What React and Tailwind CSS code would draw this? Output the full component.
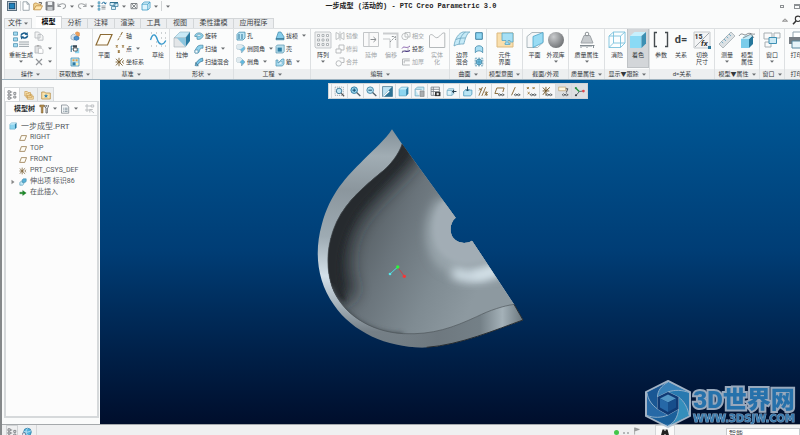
import React, { useState } from "react";

// small glyphs, drawn on a 10x10 grid
const glyphs = {
    app: <><rect x=".5" y=".5" width="9" height="9" fill="#d5dbe0" stroke="#5b6e7c" /><rect x="2.3" y="2.3" width="5.4" height="5.4" fill="#2384bd" stroke="#124d77" /></>,
    file: <path d="M2 .8h4l2.2 2.3v6.2H2zM6 .8v2.4h2.2" fill="#fff" stroke="#8b979e" strokeWidth=".8" />,
    open: <><path d="M.7 8.8V3l1-1h2l1 1h3v2" fill="#f3d695" stroke="#bd8d42" strokeWidth=".8" /><path d="M.8 8.8 3 4.8h6.5L7.6 8.8z" fill="#ffe6ae" stroke="#bd8d42" strokeWidth=".8" /><path d="M5.8 1.4 8.6 1.6 8.2 3.4" fill="none" stroke="#444" strokeWidth=".8" /></>,
    save: <><path d="M1 1h8v8H1z" fill="#85898d" stroke="#6c7074" strokeWidth=".8" /><path d="M2.8 1h4.4v3H2.8z" fill="#eef1f3" /><path d="M2.5 6h5v3h-5z" fill="#c8cccf" /></>,
    undo: <path d="M1 2.5v3h3M1.2 5.3C3 2.2 7.5 2 8.5 4.3 9 6.3 7.3 7.5 5.8 7.6" fill="none" stroke="#9b9fa2" strokeWidth="1.1" />,
    redo: <path d="M9 2.5v3H6M8.8 5.3C7 2.2 2.5 2 1.5 4.3 1 6.3 2.7 7.5 4.2 7.6" fill="none" stroke="#a5a8aa" strokeWidth="1.1" />,
    regen: <><path d="M1 .8h2v2H1zM1 4h2v2H1zM1 7.2h2v2H1z" fill="#8dcbe6" stroke="#377c9f" strokeWidth=".5" /><path d="M4.5 5h4M4.5 8h4M4.5 6.5h4" stroke="#707c84" strokeWidth=".7" /><path d="M5 3C5 .8 8 .8 8.5 2.5M7.3 2.3l1.3.6.5-1.4" fill="none" stroke="#14679a" strokeWidth="1" /></>,
    windows: <><path d="M1 1.5h5v3H1zM5 2.5h4v3H5zM2.5 5.5h4v3h-4z" fill="#d7eef8" stroke="#4685a5" strokeWidth=".8" /><path d="M1 1.5h8" stroke="#2f708f" /></>,
    closeWin: <path d="M2 2.5h6v5.2H2zM3 3.2l4 3.8M7 3.2 3 7" fill="none" stroke="#60666a" strokeWidth=".8" />,
    box: <path d="M1 3.2 3.2 1H9v5.8L6.8 9H1zM1 3.2h5.8V9M6.8 3.2 9 1" fill="#dff5fd" stroke="#3b9bc4" strokeWidth=".8" />,
    copy: <path d="M1 1h3.5L6 2.5V7H1zM4 3.4h3.4L9 5v4.2H4z" fill="#f4f5f5" stroke="#b4b8bb" strokeWidth=".8" />,
    paste: <><path d="M1 2h6v7H1z" fill="#e2e3e4" stroke="#b2b5b7" strokeWidth=".8" /><path d="M2.7 1h2.6v1.6H2.7z" fill="#aaa" /><path d="M4.4 4.2h3L9 5.8v3.6H4.4z" fill="#fff" stroke="#b2b5b7" strokeWidth=".7" /></>,
    cut: <path d="m2 2 6 6M8 2 2 8" stroke="#92969a" strokeWidth="1.2" />,
    userData: <><path d="M5 2.2 7 .8l2.4 1v3L7.3 6" fill="#f0a25d" stroke="#c77a36" strokeWidth=".5" /><path d="M1 4.8 3.3 3l3 1.4v3.2L4 9.2 1 8z" fill="#d5e4ef" stroke="#7e99ac" strokeWidth=".6" /><path d="m4 6 3-1 2 1.2v2L6.4 9.4 4 8.4z" fill="#4c91cd" stroke="#2b66a0" strokeWidth=".5" /></>,
    copyGeom: <><path d="M1.2 8V2h1.6M1.2 5h1.6" fill="none" stroke="#2a6f92" /><path d="M3 1.2h4v2.4H3z" fill="#3b4b56" /><path d="M5 4h4.2v5.2H5z" fill="#8fd4ef" /><path d="M3.5 4h3.7v3H3.5z" fill="#fff" stroke="#333" strokeWidth=".7" /></>,
    shrink: <><path d="M1 1h8v8H1z" fill="#bfe5f3" stroke="#4593b5" strokeWidth=".8" /><path d="M2.5 2.3h2v2h-2zM5.6 2.3h2v2h-2z" fill="#e3a24b" /><path d="M2.5 5.3h3v3h-3z" fill="#2e7ba3" /><path d="M6 6h2.3v2.3H6z" fill="#fff2b8" /></>,
    axis: <path d="M2.8 9.2 4 7.2M4.4 6.4l.8-1.3M5.6 4.4 7.4 1" stroke="#8a6b35" strokeWidth="1" />,
    points: <path d="m.8 1.3 2 2m0-2-2 2M7 1.3l2 2m0-2-2 2M2.8 6.5l2 2m0-2-2 2" stroke="#9a753a" strokeWidth="1.1" />,
    csys: <path d="M4 .8v8.4M.6 5H6M1 1.8l3 3.2 3.6-3.4M1 8.4 4 5l3.6 3.6M8.6 3.4 7.4 5l1.2 1.6" fill="none" stroke="#765b2e" strokeWidth=".9" />,
    revolve: <><path d="M.8 4.5C2 1 8 1 9.2 4.5 8.5 7.5 5.5 9 3 8.2V5.5H.8z" fill="#8fd3ec" stroke="#4c8aa5" strokeWidth=".7" /><ellipse cx="5" cy="4.3" rx="2" ry="1" fill="#f1fbff" stroke="#4c8aa5" strokeWidth=".5" /></>,
    sweep: <><path d="M1 6C2 6 2.5 1.4 6 1.2h3v3H7C5.5 4.5 5.5 9 4 9H1z" fill="#8ed1ec" stroke="#4787a5" strokeWidth=".7" /><path d="M1 6h3v3H1z" fill="#f6fcff" stroke="#4787a5" strokeWidth=".6" /></>,
    blend: <><path d="M1 8.5C2 5 4.5 2 8.5 1L9 4C6 4.5 4 6.5 3.5 9z" fill="#78c4e6" stroke="#3c7997" strokeWidth=".7" /><path d="M1 5.5 4.5 8.8" stroke="#315c72" strokeWidth=".8" /></>,
    hole: <><path d="M1 3.5 3 1.2h6V7L7 9H1z" fill="#bde6f6" stroke="#428eae" strokeWidth=".8" /><path d="M3 3v5M6 3v5" stroke="#287397" strokeWidth="1" /></>,
    round: <><path d="M1 1h5c2 .4 3 2 3 4L5.5 9C5.5 6 4.5 5 1 5z" fill="#6fbfe2" stroke="#91aebc" strokeWidth=".7" /><path d="M1 1h4.6L8 2.6 4.6 5.2 1 4.7z" fill="#dfeaef" /></>,
    chamfer: <><path d="M1 1h4l4 4-3.5 4V6.4L3.5 5H1z" fill="#62b8de" stroke="#87a6b5" strokeWidth=".7" /><path d="M1 1h4l1.5 1.6L3.8 5H1z" fill="#dfeaef" /></>,
    draft: <><path d="M1 7.8 3.4 1h2.5L9 5.8v3H1z" fill="#86cdeb" stroke="#3b86a8" strokeWidth=".7" /><path d="M1 7.8h8" stroke="#2a6582" /></>,
    shell: <><path d="M1 2.4 2.2 1h7v6.5L8 9H1z" fill="#b8dfee" stroke="#5a94ad" strokeWidth=".7" /><path d="M2.6 3.6h4.2v4H2.6z" fill="#2d7da3" /></>,
    rib: <><path d="M1 3h2v3l4-4h2v5L7.4 9H1z" fill="#a7dbf0" stroke="#4f92b0" strokeWidth=".7" /><path d="M3 6.2 7 4v3" fill="#effaff" stroke="#4f92b0" strokeWidth=".5" /></>,
    mirror: <path d="M1 1.5 4 3v4L1 8.5zM9 1.5 6 3v4l3 1.5zM5 .5v9" fill="none" stroke="#b2b6b8" strokeWidth=".8" />,
    trim: <path d="M4 1h5v5H6M1 5h5v4H1zM4 1v4" fill="none" stroke="#b2b6b8" strokeWidth=".9" />,
    merge: <><circle cx="3.7" cy="6.4" r="2.7" fill="none" stroke="#b2b6b8" strokeWidth=".9" /><path d="M4.5 1H9v4.5H6.5" fill="none" stroke="#b2b6b8" strokeWidth=".9" /></>,
    intersect: <><circle cx="4" cy="5.5" r="3.2" fill="none" stroke="#b2b6b8" strokeWidth=".8" /><path d="M4 1.5h5V6H4z" fill="none" stroke="#b2b6b8" strokeWidth=".8" /></>,
    project: <><path d="M1 4.5C3 1 5 5.5 9 2" fill="none" stroke="#7a4ea3" strokeWidth=".9" /><path d="M1 8.5C3 5 5 9 9 6.5" fill="none" stroke="#4b3b82" strokeWidth="1.1" /><path d="M2 6V8M7 4v2.5" stroke="#999" strokeWidth=".6" /></>,
    thicken: <path d="M8.8 2H1.5v6h7.3M3.2 6.3V3.8h5.6" fill="none" stroke="#b5b8ba" strokeWidth="1" />,
    fill: <path d="M1.7 1.7h6.6v6.6H1.7z" fill="#8fd6f2" stroke="#2f7698" strokeWidth=".9" />,
    style: <path d="M1.3 8.7V4C2 1 8 1 8.7 4v4.7C7 6.2 3 6.2 1.3 8.7z" fill="#a9def3" stroke="#3f87a8" strokeWidth=".8" />,
    freestyle: <><path d="M1.2 1.2h7.6v7.6H1.2z" fill="none" stroke="#3b87aa" strokeWidth=".8" strokeDasharray="2 1" /><circle cx="5" cy="5" r="2.9" fill="#72c3e5" stroke="#2c6c8c" strokeWidth=".6" /><path d="M2.2 5h5.6M5 2.2v5.6" stroke="#2c6c8c" strokeWidth=".4" /></>,
    plane: <path d="M.8 8 3 2h6.4L7.2 8z" fill="#fffdf6" stroke="#8a6b3b" strokeWidth=".9" />,
    solidBox: <><path d="M1 3 3 1h6.2L7.6 3z" fill="#c6effd" /><path d="M1 3h6.4v6H1z" fill="#8cd5f0" /><path d="M7.4 3 9.2 1v6L7.4 9z" fill="#287da6" /><path d="M1 3 3 1h6.2v6L7.4 9H1z" fill="none" stroke="#4a94b3" strokeWidth=".5" /></>,
    protrusion: <><path d="M1 5.5 3 4h3v3.5L4.5 9H1z" fill="#c5e9f6" stroke="#3b88aa" strokeWidth=".7" /><path d="M4 2.3 5.5 1H9v3.3L7.5 5.5H4z" fill="#58b1d8" stroke="#3b88aa" strokeWidth=".7" /></>,
    insert: <path d="M1 4h3.6V1.8L9 5 4.6 8.2V6H1z" fill="#1c8d28" stroke="#0c5c15" strokeWidth=".4" />,
    tree: <path d="M1 .8h2.2V3H1zM1 4h2.2v2H1zM1 7h2.2v2.2H1zM3.2 2h2M3.2 5h2M3.2 8h2M6.8 2.4h2v2h-2zM6.8 6h2v2h-2z" fill="none" stroke="#6e7276" strokeWidth=".8" />,
    folders: <path d="M.8 1.5h2.5l.8 1h2.4V6H.8zM2.2 3.3h2.5l.8 1h2.4v3.3H2.2zM3.4 5.2H6l.7.8h2.6v3.2H3.4z" fill="#fbe6b5" stroke="#c99c52" strokeWidth=".7" />,
    favorites: <><path d="M.7 2h3l.8 1h4.8v6H.7z" fill="#fae3ac" stroke="#b98f49" strokeWidth=".8" /><path d="m5 3.8.6 1.4 1.5.1L6 6.3l.3 1.5L5 7l-1.3.8L4 6.3 2.9 5.3l1.5-.1z" fill="#2b80b4" /></>,
    tools: <><path d="M.8 1h4.4l.6 1.6H4V9H2.3V2.8H.8z" fill="#b8904e" stroke="#705527" strokeWidth=".5" /><path d="M6 1v2.2l1 .7V9h1.3V3.9l1-.7V1M7.6 1v1.8" fill="none" stroke="#62676b" strokeWidth=".9" /></>,
    list: <><path d="M1.5 1h5.3L8.7 3v6.2H1.5z" fill="#f5f7f8" stroke="#838c93" strokeWidth=".8" /><path d="M3 4.2h.8M4.6 4.2h3M3 5.8h.8M4.6 5.8h3M3 7.4h.8M4.6 7.4h3" stroke="#5d7482" strokeWidth=".7" /></>,
    filter: <path d="M1 1h2v2H1zM1 5h2v2H1zM4 2h2M4 6h1M6.2 1h2.5v2H6.2zM4.8 5.5 9 9M4.8 5.5v3M4.8 5.5h3" fill="none" stroke="#b7babd" strokeWidth=".9" />,
    zoomFit: <><path d="M1 1h7.5v7.5H1z" fill="none" stroke="#76858e" strokeWidth=".6" strokeDasharray="1 .8" /><circle cx="4.6" cy="4.5" r="2.5" fill="#bfe6f6" stroke="#377391" strokeWidth=".8" /><path d="m6.5 6.5 2.7 2.8" stroke="#555" strokeWidth="1.1" /></>,
    zoomIn: <><circle cx="3.8" cy="3.8" r="3" fill="#9ad5ee" stroke="#28759a" strokeWidth=".8" /><path d="M2.2 3.8h3.2M3.8 2.2v3.2" stroke="#104e70" strokeWidth=".9" /><path d="m6 6 3.4 3" stroke="#51606a" strokeWidth="1.2" /></>,
    zoomOut: <><circle cx="3.8" cy="3.8" r="3" fill="#b1dff2" stroke="#4083a2" strokeWidth=".8" /><path d="M2.2 3.8h3.2" stroke="#104e70" strokeWidth=".9" /><path d="m6 6 3.4 3" stroke="#51606a" strokeWidth="1.2" /></>,
    repaint: <><path d="M.5.5h9v9h-9z" fill="#bfe3f2" stroke="#326680" strokeWidth=".6" /><path d="M9.5.5v9h-9L4 6z" fill="#2f7395" /><path d="M.5 9.5 6 4l1 1-5 4.5z" fill="#fff" /></>,
    savedView: <><path d="M1 3 3 1h6v3M1 3v6h4M1 3h6" fill="#ccebf6" stroke="#6fa7be" strokeWidth=".7" /><path d="M5.5 4.5h3.7v5H5.5z" fill="#a9adb0" stroke="#737779" strokeWidth=".5" /></>,
    viewMgr: <><path d="M1 1h7.5v7.5H1zM1 3h7.5M1 5h7.5M3 1v7.5" fill="#fff" stroke="#6e777d" strokeWidth=".7" /><path d="M4.5 5.5h5v3.7h-5z" fill="#333" /><circle cx="7" cy="7.3" r="1.1" fill="#ddd" /></>,
    boxArrow: <><path d="M1 4 2.5 2.5H7V7L5.5 8.5H1zM1 4h4.5v4.5" fill="#ddf2fa" stroke="#6fa9c2" strokeWidth=".7" /><path d="M9.5 5H6M7.3 3.6 5.7 5l1.6 1.4" fill="none" stroke="#243f50" strokeWidth=".9" /></>,
    boxUp: <><path d="M1.5 5 3 3.7h6v4L7.5 9h-6z" fill="#b9e4f4" stroke="#4797ba" strokeWidth=".7" /><path d="M5 .5v4M3.6 3 5 4.6 6.4 3" fill="none" stroke="#1c4b66" strokeWidth=".9" /></>,
    datums: <path d="M.8 8.8 4 1M3.5 9 7 1M1 2l2 2m0-2L1 4M6 5.5l3 2.8M9 5.3 6 8.5M7.5 4.8V9" fill="none" stroke="#806130" strokeWidth=".8" />,
    planeEye: <><path d="M4 6.8H.8L2.6 1.8h6.6L8 5.5" fill="none" stroke="#8a6b3b" strokeWidth=".9" /><Eye /></>,
    axisEye: <><path d="M1.4 8.5 4.8 1" stroke="#8a6b3b" strokeWidth=".9" /><Eye /></>,
    pointsEye: <><path d="m.8 1 1.8 1.8m0-1.8L.8 2.8M6 1l1.8 1.8m0-1.8L6 2.8M1.5 5.6l1.8 1.8m0-1.8L1.5 7.4" stroke="#9a753a" strokeWidth=".9" /><Eye /></>,
    csysEye: <><path d="M3.6.8v8M.6 4.5h6M3.6 4.5l3.6-3.3M3.6 4.5.8 1.4M3.6 4.5.8 8" stroke="#765b2e" strokeWidth=".9" /><Eye /></>,
    noteEye: <><path d="M.6 1h6.5v3.3H.6z" fill="#fff5dc" stroke="#b49b6b" strokeWidth=".6" /><path d="M7 2.5h2L7.5 6" fill="none" stroke="#444" strokeWidth=".8" /><Eye /></>,
    spin: <><path d="M2 2.2 5 5l4-.5M5 5 1.8 8.5" fill="none" stroke="#5e6b72" strokeWidth=".9" /><path d="M2 2.2 4.7 5" stroke="#299c44" strokeWidth="1.2" /><circle cx="8.6" cy="4.6" r="1.2" fill="#e0474d" /><circle cx="1.7" cy="1.9" r="1" fill="#238f3d" /><circle cx="1.8" cy="8.4" r="1" fill="#3d464b" /></>,
    search: <><circle cx="6" cy="3.8" r="2.7" fill="none" stroke="#333" strokeWidth="1.1" /><path d="M4 6 1 9.2" stroke="#333" strokeWidth="1.5" /></>,
    binoculars: <path d="M2.5 1.5h2V3h1V1.5h2L9.5 9h-4V6h-1v3h-4z" fill="#222" />,
    browser: <><circle cx="5.5" cy="5" r="3.8" fill="#53b1dc" stroke="#2777a0" strokeWidth=".7" /><path d="M5.5 1.5C3 4 4 7 6 8.5M2 4.2c2 1.5 5 1 7-.5" fill="none" stroke="#dff5ff" strokeWidth=".7" /><path d="M.5 6h3v3.4h-3z" fill="#e6eef2" stroke="#557" strokeWidth=".5" /></>,
    flag: <path d="M2 9.5V1l6 2-6 2" fill="#9a9ea0" stroke="#888" strokeWidth=".8" />,
}

function Eye() {
    return <path d="M3.8 8q1.2-1.6 2.6 0 1.4-1.6 2.9 0-1.4 1.6-2.9 0-1.4 1.6-2.6 0z" fill="#fff" stroke="#50565a" strokeWidth=".8" />
}

// large ribbon pictures, drawn on an 18x18 grid
const pictures = {
    regen: <><path d="M1.5 1h4v3.2h-4zM1.5 6.8h4V10h-4zM1.5 12.6h4v3.2h-4z" fill="#a4dcf2" stroke="#5596b3" strokeWidth=".8" /><path d="M7 11h10M7 13.2h10M7 15.4h10" stroke="#9ba4a9" /><path d="M9 4.7C9.5 1.7 13 1.5 14.3 3M15.7 4.500C15 7.500 11 7.500 10.500 6" fill="none" stroke="#175c8c" strokeWidth="1.5" /><path d="m12.500 3.800 3.500.2-.6-3zM12 5.500l-3.600-.5.9 3.500z" fill="#175c8c" /></>,
    plane: <path d="M1 14 5.5 3.5H17L12.5 14z" fill="#fffdf7" stroke="#8c6b34" strokeWidth="1.2" />,
    sketch: <><path d="M2 2h1M7 2h1M12 2h1M16 2h1M2 7h1M12 7h1M16 7h1M2 15h1M7 15h1M12 15h1M7 11h1M16 15h1" stroke="#9da5aa" /><path d="M1.5 9C4 .5 7 4 8.5 9s5.5 6 8.3.5" fill="none" stroke="#3899cc" strokeWidth="1.3" /></>,
    extrude: <><path d="M1 7 7 1h10l-4.5 6z" fill="#c8e9f6" stroke="#86aebf" strokeWidth=".6" /><path d="M12.5 7 17 1v9l-4.5 6z" fill="#2b7da4" /><path d="M1 7h11.5v9H1z" fill="#e3e6e8" stroke="#a2adb3" strokeWidth=".6" /><path d="M4 7h8.5v9z" fill="#8cc6df" /></>,
    pattern: <><path d="M1 1h15l1 1v15H2l-1-1z" fill="#eff0f1" stroke="#c5c9cc" /><path d="M3.5 3.5h2v2h-2zM8 3.5h2v2H8zM12.5 3.5h2v2h-2zM3.5 8h2v2h-2zM8 8h2v2H8zM12.5 8h2v2h-2zM3.5 12.5h2v2h-2zM8 12.5h2v2H8zM12.5 12.5h2v2h-2z" fill="#fff" stroke="#9ea4a8" strokeWidth=".8" /></>,
    extend: <><path d="M1.500 1.500h15v14h-15zM7 1.500v14" fill="#fafafa" stroke="#c3c6c8" /><path d="M8.500 8.500h5.500M11.500 6l2.600 2.500-2.600 2.500" stroke="#8c9093" /></>,
    offset: <><path d="M1 2.5h14.5V17" fill="none" stroke="#cbcdcf" strokeWidth="2" /><path d="M1 8h7v9" fill="none" stroke="#c3c6c8" /><path d="M8 11l5-5M9.800 5.500h3.700V9" fill="none" stroke="#8f9396" strokeDasharray="2 1" /></>,
    solidify: <path d="M1.5 16.5V4.5C5 1 6.5 8.5 10 6.3 12.5 5 14 1.2 16.8 2v14.5z" fill="#fbfbfb" stroke="#b4b8ba" />,
    boundary: <><path d="M1 15C2 7 6 2 10 1h6.8c-3 1-5 8-6 12-3 0-7 0-9.8 2z" fill="#c6eaf7" stroke="#6aa5bf" strokeWidth=".8" /><path d="M3 8.5C6 7 9 7 12.5 7M6 13.5C7 7 9 3 12.5 1.2" fill="none" stroke="#6aa5bf" strokeWidth=".8" /></>,
    component: <><path d="M1 2h16v14H1z" fill="#f9dfad" stroke="#dcb97e" /><path d="M6 2h11v9h-3v-1.500h-2V12h2v1.500h-5V12h1v-2.500H6z" fill="#a6e0f5" stroke="#59a4c3" strokeWidth=".8" /></>,
    section: <><path d="M1 5.5 6 1.5h11v10l-5.5 5H1z" fill="#f5f7f8" stroke="#9ba8af" strokeWidth=".8" /><path d="M7 5.5 17 1.5v10l-10 5z" fill="#9adcf4" stroke="#4aa4ca" strokeWidth=".8" /></>,
    mass: <><path d="M6 4.5 3 12h12l-3-7.5z" fill="#c6cacd" stroke="#a0a5a9" /><circle cx="9" cy="3" r="1.8" fill="none" stroke="#8e9498" /><path d="M2 14.5h14.5M3 14.5V17M5 14.5V16M7 14.5V16M9 14.5V17M11 14.5V16M13 14.5V16M15.5 14.5V17" stroke="#69747b" strokeWidth=".8" /></>,
    wire: <path d="M1 5 5.5 1H17v11l-4.5 4.5H1zM1 5h11.5v11.5M12.5 5 17 1M5.5 1v11H17M1 16.5 5.5 12" fill="#fcfeff" stroke="#7cc2dc" strokeWidth=".9" />,
    shade: <><path d="M1 5 5.5 1H17l-4.5 4z" fill="#c7f0fd" /><path d="M1 5h11.5v12H1z" fill="#8adaf5" /><path d="M12.5 5 17 1v11.5L12.5 17z" fill="#3d90b3" /></>,
    params: <path d="M5 1.5H2.500v14H5M13 1.5h2.500v14H13" fill="none" stroke="#454b4f" strokeWidth="1.4" />,
    measure: <><path d="M1 13 13 1l4 4L5 17z" fill="#dce1e4" stroke="#a4adb2" strokeWidth=".8" /><path d="m3.5 10.5 1.7 1.7M6 8l2 2M8.5 5.5l1.7 1.7M11 3l2 2" stroke="#59a0bf" strokeWidth=".8" /></>,
    props: <><path d="M3 8h8v9H3z" fill="#7accea" /><path d="M11 8 15 4v9l-4 4z" fill="#25779b" /><path d="M3 8 7 4h8l-4 4z" fill="#c4eaf7" /><path d="M1 5c3-5 5 1 8-2 3-2 5 1 8 0M5 7l8-4M12 2l4 5" fill="none" stroke="#737b80" strokeWidth=".8" /></>,
    window: <path d="M1 2h8v6H1zM11 2h6v5h-6zM2 11h6v5H2z" fill="#fafafa" stroke="#a7afb3" />,
    print: <><path d="M5 6V1h9v5" fill="#fff" stroke="#8fa3ae" /><path d="M1 6h17v7H1z" fill="#777e84" /><path d="M4 10h10v7H4z" fill="#e7f4fa" stroke="#5989a1" /><path d="M14 8h2" stroke="#fff" /></>,
}

function Glyph({ name, className = "size-2.5" }) {
    return <svg viewBox="0 0 10 10" className={`${className} shrink-0`} fill="none" aria-hidden="true">{glyphs[name]}</svg>
}

function Caret() {
    return <svg viewBox="0 0 4 3" className="w-1 h-[3px] shrink-0" aria-hidden="true"><path d="M0 .5h4L2 2.8z" fill="#6a6e71" /></svg>
}

function Picture({ name }) {
    if (name === 'sphere') {
        return <span className="size-4 m-px rounded-full bg-radial-[at_35%_30%] from-[#c9cbcd] to-[#55585b]"></span>
    }
    if (name === 'relation') {
        return <span className="h-[18px] text-[11px] leading-[18px] font-bold text-[#3c4246]">d=</span>
    }
    if (name === 'switch') {
        return (
            <svg viewBox="0 0 18 18" className="size-[18px]" aria-hidden="true">
                <path d="M1 1h16v16H1z" fill="#f3f4f5" stroke="#c5c9cc" />
                <path d="M2 16 16 2" stroke="#a3a9ad" />
                <text x="1.5" y="8" fontSize="7" fontWeight="700" fill="#333">15</text>
                <text x="8" y="15" fontSize="8" fontStyle="italic" fontWeight="700" fill="#333">fx</text>
                <path d="M15 15h3v3h-3z" fill="#287599" />
            </svg>
        )
    }
    return (
        <svg viewBox="0 0 18 18" className="size-[18px] shrink-0" fill="none" aria-hidden="true">
            {pictures[name]}
            {name === 'window' && <path d="M6 6.5h7.5v6H6z" fill="#cceaf5" stroke="#3f91b5" />}
        </svg>
    )
}

function Big({ icon, text, caret, width = "w-5", active, disabled }) {
    return (
        <button className={`${width} ${active ? 'bg-[#d3d6d9] outline outline-[#bfc3c6]' : ''} ${disabled ? 'text-[#a2a6a9]' : ''} h-[38px] pt-0.5 flex flex-col items-center shrink-0`}>
            <Picture name={icon} />
            <span className="mt-0.5 whitespace-pre leading-[7px] text-center">{text}</span>
            {caret && <span className="h-1.5 flex items-center"><Caret /></span>}
        </button>
    )
}

function Small({ items, width }) {
    return (
        <div className={`${width} flex flex-col shrink-0`}>
            {items.map(([icon, text, caret, disabled]) => (
                <button key={icon} aria-label={text || icon} className={`${disabled ? 'text-[#a2a6a9]' : ''} h-[13px] flex items-center gap-px whitespace-nowrap`}>
                    <Glyph name={icon} />
                    {text}
                    {caret && <span className="ml-[3px] flex"><Caret /></span>}
                </button>
            ))}
        </div>
    )
}

function Group({ label, width, pad = "", caret = true, children }) {
    return (
        <section className={`${width} shrink-0 border-r border-[#dde0e2] flex flex-col`}>
            <div className={`${pad} h-10 flex items-start`}>{children}</div>
            <button className="h-2.5 w-full bg-[#edeff0] flex items-center justify-center gap-[3px] whitespace-nowrap">
                {label}{caret && <Caret />}
            </button>
        </section>
    )
}

function Ribbon() {
    return (
        <div className="ml-0.5 flex overflow-hidden border-l border-t border-[#dde0e2] bg-[#fbfcfc] text-[6px] leading-[8px] text-[#33383c]">
            <Group label="操作" width="w-[52px]" pad="pl-[3px]">
                <Big icon="regen" text="重新生成" caret width="w-[26px]" />
                <Small width="w-[20px]" items={[['copy'], ['paste', '', true], ['cut', '', true]]} />
            </Group>
            <Group label="获取数据" width="w-9" pad="justify-center">
                <Small width="w-2.5" items={[['userData'], ['copyGeom'], ['shrink']]} />
            </Group>
            <Group label="基准" width="w-[77px]" pad="pl-px gap-px">
                <Big icon="plane" text="平面" />
                <Small width="w-[31px]" items={[['axis', '轴'], ['points', '点', true], ['csys', '坐标系']]} />
                <Big icon="sketch" text="草绘" width="w-[22px]" />
            </Group>
            <Group label="形状" width="w-16">
                <Big icon="extrude" text="拉伸" width="w-6" />
                <Small width="w-9" items={[['revolve', '旋转'], ['sweep', '扫描', true], ['blend', '扫描混合']]} />
            </Group>
            <Group label="工程" width="w-[77px]" pad="pl-0.5">
                <Small width="w-[39px]" items={[['hole', '孔'], ['round', '倒圆角', true], ['chamfer', '倒角', true]]} />
                <Small width="w-8" items={[['draft', '拔模', true], ['shell', '壳'], ['rib', '筋', true]]} />
            </Group>
            <Group label="编辑" width="w-[139px]">
                <Big icon="pattern" text="阵列" caret width="w-6" />
                <Small width="w-[26px]" items={[['mirror', '镜像', false, true], ['trim', '修剪', false, true], ['merge', '合并', false, true]]} />
                <Big icon="extend" text="延伸" disabled />
                <Big icon="offset" text="偏移" disabled />
                <Small width="w-6" items={[['intersect', '相交', false, true], ['project', '投影'], ['thicken', '加厚', false, true]]} />
                <Big icon="solidify" text={"实体\n化"} width="w-6" disabled />
            </Group>
            <Group label="曲面" width="w-[37px]">
                <Big icon="boundary" text={"边界\n混合"} width="w-6" />
                <Small width="w-2.5" items={[['fill'], ['style'], ['freestyle']]} />
            </Group>
            <Group label="模型意图" width="w-9" pad="justify-center">
                <Big icon="component" text={"元件\n界面"} />
            </Group>
            <Group label="截面/外观" width="w-[46px]" pad="justify-center" caret={false}>
                <Big icon="section" text="平面" />
                <Big icon="sphere" text="外观库" caret width="w-[22px]" />
            </Group>
            <Group label="质量属性" width="w-9" pad="justify-center">
                <Big icon="mass" text="质量属性" caret width="w-[26px]" />
            </Group>
            <Group label="显示▼跟踪" width="w-[45px]" pad="justify-center">
                <Big icon="wire" text="消隐" width="w-[22px]" />
                <Big icon="shade" text="着色" active />
            </Group>
            <Group label="d=关系" width="w-[65px]" pad="justify-center" caret={false}>
                <Big icon="params" text="参数" />
                <Big icon="relation" text="关系" />
                <Big icon="switch" text={"切换\n尺寸"} width="w-[22px]" />
            </Group>
            <Group label="模型▼属性" width="w-[45px]" pad="justify-center">
                <Big icon="measure" text="测量" caret />
                <Big icon="props" text={"模型\n属性"} />
            </Group>
            <Group label="窗口" width="w-[25px]" pad="justify-center">
                <Big icon="window" text="窗口" caret />
            </Group>
            <Group label="打印" width="w-6" pad="justify-center" caret={false}>
                <Big icon="print" text="打印" />
            </Group>
        </div>
    )
}

const quickItems = [
    ['file'], ['open'], ['save'], ['undo', true], ['redo', true], ['regen'], ['windows', true], ['closeWin'], ['box', true],
]

function TitleBar() {
    return (
        <div className="relative h-3 flex items-center pl-[5px]">
            <Glyph name="app" />
            <div className="ml-[3px] h-2.5 border-l border-[#d0d3d5] flex items-center gap-0.5 pr-0.5">
                {quickItems.map(([name, caret]) => (
                    <button key={name} aria-label={name} className="flex items-center gap-px">
                        <Glyph name={name} />
                        {caret && <span className="w-[7px] flex justify-center"><Caret /></span>}
                    </button>
                ))}
            </div>
            <div className="pl-1 h-2.5 border-l border-[#d0d3d5] flex items-center"><Caret /></div>
            <h1 className="absolute inset-x-0 mr-[-20px] text-center whitespace-pre pointer-events-none text-[7px] leading-[12px] font-bold text-[#222] font-['Liberation_Mono','Noto_Sans_CJK_SC',monospace]">一步成型 (活动的) - PTC Creo Parametric 3.0</h1>
            <div className="ml-auto flex items-center gap-2.5">
                <button aria-label="minimize" className="w-1 h-[3px] border border-[#8c9093]"></button>
                <button aria-label="restore" className="w-1.5 h-[5px] border border-[#8c9093] border-t-2"></button>
            </div>
        </div>
    )
}

function Tabs() {
    const [current, setCurrent] = useState('模型')
    const tabs = [
        ['模型', 'w-[26px]'], ['分析', 'w-[26px]'], ['注释', 'w-[27px]'], ['渲染', 'w-[26px]'],
        ['工具', 'w-[26px]'], ['视图', 'w-[27px]'], ['柔性建模', 'w-10'], ['应用程序', 'w-10'],
    ]
    return (
        <div className="h-4 pl-0.5 flex items-end text-[7px] leading-[9px] text-[#3e4346]">
            <button className="w-7 h-2.5 mr-1 border border-b-0 border-[#d3d6d8] bg-[#f0f2f3] flex items-center justify-center gap-0.5">文件<Caret /></button>
            {tabs.map(([name, width]) => (
                <button
                    key={name}
                    onClick={() => setCurrent(name)}
                    className={`${width} ${current === name ? 'h-3 bg-white font-bold text-black' : 'h-2.5 bg-[#eceef0]'} border border-b-0 border-l-0 border-[#d3d6d8] whitespace-nowrap`}
                >
                    {name}
                </button>
            ))}
            <div className="ml-auto flex items-center gap-1 h-4">
                <button aria-label="collapse"><svg viewBox="0 0 6 4" className="w-1.5 h-1"><path d="M.5 3.2 3 .8l2.5 2.4z" fill="#ddd" stroke="#666" strokeWidth=".7" /></svg></button>
                <button aria-label="search" className="-mr-0.5"><Glyph name="search" /></button>
            </div>
        </div>
    )
}

const treeRows = [
    ['plane', 'RIGHT'], ['plane', 'TOP'], ['plane', 'FRONT'], ['csys', 'PRT_CSYS_DEF'], ['protrusion', '伸出项 标识86', true], ['insert', '在此插入'],
]

function ModelTree() {
    return (
        <aside className="w-[98px] shrink-0 pl-0.5 pt-[7px] pb-1.5 pr-px flex flex-col bg-[#fafbfb] text-[#54595e]">
            <div className="flex h-3.5">
                <button aria-label="模型树" className="w-4 border border-b-0 border-[#d6d9db] bg-white flex items-center justify-center"><Glyph name="tree" /></button>
                <button aria-label="文件夹" className="w-[18px] border border-l-0 border-b-0 border-[#d6d9db] bg-[#eceff0] flex items-center justify-center"><Glyph name="folders" /></button>
                <button aria-label="收藏夹" className="w-4 border border-l-0 border-b-0 border-[#d6d9db] bg-[#eceff0] flex items-center justify-center"><Glyph name="favorites" /></button>
            </div>
            <div className="flex-1 flex flex-col border-2 border-t border-[#d6d9db] bg-[#fcfcfc]">
                <div className="h-3.5 pl-2 border-b border-[#d9dcde] flex items-center gap-[3px]">
                    <h2 className="text-[7px] leading-[10px] font-bold text-[#2c3033] whitespace-nowrap mr-px">模型树</h2>
                    <button aria-label="设置" className="flex items-center gap-1"><Glyph name="tools" /><Caret /></button>
                    <button aria-label="显示" className="flex items-center gap-1"><Glyph name="list" /><Caret /></button>
                    <button aria-label="过滤" className="ml-1"><Glyph name="filter" /></button>
                </div>
                <ul className="pt-1 text-[7px] leading-[11px] whitespace-nowrap">
                    <li className="h-3 pl-[3px] flex items-center gap-1 text-[8px]"><Glyph name="solidBox" className="size-2" />一步成型.PRT</li>
                    {treeRows.map(([icon, text, open]) => (
                        <li key={text} className="h-[11px] pl-[5px] flex items-center gap-[3px]">
                            <span className="w-[5px]">
                                {open && <svg viewBox="0 0 4 6" className="w-1 h-1.5"><path d="M.5.8 3.5 3 .5 5.2z" fill="#888" /></svg>}
                            </span>
                            <Glyph name={icon} className="size-2" />
                            {text}
                        </li>
                    ))}
                </ul>
            </div>
        </aside>
    )
}

const viewTools = [
    'zoomFit', 'zoomIn', 'zoomOut', 'repaint', 'solidBox', 'savedView', 'viewMgr', 'boxArrow',
    'boxUp', 'datums', 'planeEye', 'axisEye', 'pointsEye', 'csysEye', 'noteEye', 'spin',
]

function Part() {
    const rim = "M276 72C268 100 240 138 210 160C165 198 112 240 80 305C50 370 46 440 66 500C95 580 180 636 280 641C370 645 430 622 500 590C540 570 580 558 612 553"
    const notch = "C419 307 417 338 430 354C445 372 470 372 486 362"
    const notchBack = "C470 372 445 372 430 354C417 338 419 307 437 293"
    return (
        <svg viewBox="0 0 690 720" className="absolute left-[210px] top-10 w-[230px]" role="img" aria-label="part">
            <defs>
                <linearGradient id="flange" gradientUnits="userSpaceOnUse" x1="200" y1="30" x2="180" y2="680">
                    <stop offset="0" stopColor="#85929a" />
                    <stop offset=".12" stopColor="#a1adb4" />
                    <stop offset=".28" stopColor="#8b969d" />
                    <stop offset=".5" stopColor="#9eabb3" />
                    <stop offset=".68" stopColor="#d4e1ea" />
                    <stop offset=".82" stopColor="#a3afb7" />
                    <stop offset=".93" stopColor="#757f86" />
                    <stop offset="1" stopColor="#727d84" />
                </linearGradient>
                <linearGradient id="tail" gradientUnits="userSpaceOnUse" x1="270" y1="0" x2="640" y2="0">
                    <stop offset="0" stopColor="#707a80" stopOpacity="0" />
                    <stop offset=".3" stopColor="#6e787f" />
                    <stop offset=".65" stopColor="#748087" />
                    <stop offset=".83" stopColor="#a4b1b8" />
                    <stop offset="1" stopColor="#69757c" />
                </linearGradient>
                <linearGradient id="bowl" gradientUnits="userSpaceOnUse" x1="100" y1="330" x2="500" y2="520">
                    <stop offset="0" stopColor="#50585d" />
                    <stop offset=".35" stopColor="#6a747b" />
                    <stop offset=".7" stopColor="#7f8b92" />
                    <stop offset="1" stopColor="#8d99a0" />
                </linearGradient>
                <filter id="wide" x="-50%" y="-50%" width="200%" height="200%"><feGaussianBlur stdDeviation="26" /></filter>
                <filter id="narrow" x="-50%" y="-50%" width="200%" height="200%"><feGaussianBlur stdDeviation="7" /></filter>
                <filter id="glow" x="-50%" y="-100%" width="200%" height="300%"><feGaussianBlur stdDeviation="14" /></filter>
                <clipPath id="inside"><path d={`${rim}L486 362${notchBack}Z`} /></clipPath>
            </defs>
            <path d={`M246 28L276 72L437 293${notch}L612 553L639 600C560 628 450 675 350 682C240 686 130 640 72 555C18 480 14 390 35 315C60 220 110 170 160 120C195 85 225 60 246 28Z`} fill="url(#flange)" />
            <path d="M280 641C370 645 430 622 500 590C540 570 580 558 612 553L639 600C560 628 450 675 350 682C320 684 290 680 265 675Z" fill="url(#tail)" />
            <g clipPath="url(#inside)">
                <path d="M0 0H690V720H0Z" fill="url(#bowl)" />
                <path d="M300 60C240 170 80 240 70 400C66 460 75 500 100 540" stroke="#24282b" strokeWidth="90" fill="none" filter="url(#wide)" />
                <path d="M276 60L300 92C262 150 180 220 135 285C102 340 88 400 88 440C88 480 92 500 110 545L40 520V250Z" fill="#282c2f" filter="url(#narrow)" />
                <path d="M60 500C95 590 180 645 280 646" stroke="#454d52" strokeWidth="14" fill="none" filter="url(#narrow)" />
                <path d="M385 235C340 280 335 370 372 425C400 465 470 490 620 460L600 260Z" fill="#98a4ab" filter="url(#glow)" />
                <path d="M430 455C470 480 520 475 600 432" stroke="#d3e1e9" strokeWidth="32" fill="none" filter="url(#glow)" />
                <path d="M490 466Q530 463 565 440" stroke="#dbe8ef" strokeWidth="16" fill="none" filter="url(#glow)" />
                <path d="M420 200L600 400L540 416C500 438 440 440 405 410C355 370 360 280 404 238Z" fill="#a2adb5" filter="url(#narrow)" />
            </g>
            <path d={rim} fill="none" stroke="#4b5358" strokeWidth="2" />
            <path d="M612 553L639 600C560 628 450 675 350 682" fill="none" stroke="#272c30" strokeWidth="3" />
            <path d="M263 441L240 462" stroke="#4bdde0" strokeWidth="3" />
            <path d="M263 441L283 469" stroke="#c94349" strokeWidth="3" />
            <circle cx="263" cy="441" r="5" fill="#2ef53a" />
            <circle cx="240" cy="462" r="4" fill="#53e9ec" />
            <circle cx="283" cy="469" r="5" fill="#fa3535" />
        </svg>
    )
}

function Viewport() {
    return (
        <main className="relative flex-1 overflow-hidden bg-linear-to-b from-[#005c9b] via-[#003d75] via-50% to-[#000e2c]">
            <Part />
            <div className="absolute left-[228px] top-[3px] flex h-4 pl-0.5 border border-[#cfd4d7] bg-[#f6f7f8]">
                {viewTools.map((name) => (
                    <button key={name} aria-label={name} className={`${name === 'noteEye' || name === 'spin' ? 'bg-[#dcdfe2]' : ''} w-4 border-l border-[#d6dadc] flex items-center justify-center`}>
                        <Glyph name={name} className="size-[11px]" />
                    </button>
                ))}
            </div>
        </main>
    )
}

function StatusBar() {
    return (
        <footer className="h-[11px] shrink-0 overflow-hidden border-t border-[#a5a9ac] bg-[#eff0f1] pl-1 flex items-start text-[7px] text-[#3b4044]">
            <button aria-label="tree" className="pt-0.5 border border-[#d0d3d5]"><Glyph name="tree" /></button>
            <button aria-label="browser" className="pt-0.5 ml-1"><Glyph name="browser" /></button>
            <span className="ml-1 h-2.5 border-l border-[#d6d8da]"></span>
            <div className="ml-auto flex items-start gap-1 pt-0.5">
                <span className="mt-[3px] size-[5px] rounded-full bg-[#43c64a]"></span>
                <span className="mt-[5px] flex gap-0.5"><i className="size-0.5 bg-[#b4b7b9]"></i><i className="size-0.5 bg-[#b4b7b9]"></i></span>
                <Glyph name="flag" className="size-2" />
            </div>
            <button aria-label="find" className="ml-3.5 w-5 h-3 pt-0.5 bg-[#fafafa] border border-[#d5d7d9] flex justify-center"><Glyph name="binoculars" /></button>
            <select aria-label="选择过滤器" className="ml-[51px] mt-[3px] w-[74px] h-3 pl-0.5 appearance-none bg-white border border-[#c6cacd] text-[7px] leading-[9px]">
                <option>智能</option>
                <option>几何</option>
            </select>
        </footer>
    )
}

function Watermark() {
    return (
        <a href="#3dsjw" className="absolute right-[5px] bottom-[7px] flex items-center gap-0.5 opacity-90">
            <svg viewBox="0 0 46 48" className="w-[46px] h-12" aria-hidden="true">
                <path d="M23 1 45 12v24L23 47 1 36V12z" fill="#2878b4" stroke="#b4c4d5" strokeWidth="2" />
                <path d="M23 2 44 12.500C36 10 29 10 23 12L12 17C13 11 17 5 23 2z" fill="#3f8dc6" />
                <path d="M23 2C16 6 12.500 11 12.500 17v12C7 25 3 19 2 12.500z" fill="#1d5f9f" />
                <path d="M2 12.500C3 20 7 25 12.500 29L23 35c-7 3-14 3-21 .5z" fill="#2c73b3" />
                <path d="M2 35.500c7 2.500 14 2.500 21-.5l10.500-6C33 37 29 43 23 46z" fill="#1f69a7" />
                <path d="M23 46c6-3 10-9 10.500-17V17C39 21 43 28 44 35.500z" fill="#3a9ccb" />
                <path d="M44 12.500v23C43 28 39 21 33.500 17L23 12c7-2.500 14-2 21 .5z" fill="#2d84bd" />
                <path d="M23 2C16 6 12.500 11 12.500 17v12M2 12.500C3 20 7 25 12.500 29L23 35M2 35.500c7 2.500 14 2.500 21-.5l10.500-6M23 46c6-3 10-9 10.500-17V17M44 35.500C43 28 39 21 33.500 17L23 12M44 12.500c-7-2.500-14-3-21-.5l-10.500 5" fill="none" stroke="#a9c6de" strokeWidth=".9" />
                <path d="M23 12 33.500 17v12L23 35l-10.500-6V17z" fill="#123f7c" />
                <path d="m23 14.500 8 4-8 4-8-4z" fill="#5ba4d4" />
                <path d="m15 18.500 8 4V32l-8-4.500z" fill="#2b72b4" />
                <path d="M31 18.500v9L23 32v-9.500z" fill="#1a5595" />
            </svg>
            <span className="flex flex-col items-center whitespace-nowrap [paint-order:stroke]">
                <span className="text-[24px] leading-[28px] font-black text-[#2b7cb8] [-webkit-text-stroke:4px_#a9b9cb]">3D世界网</span>
                <span className="text-[10px] leading-[9px] font-bold text-[#3f87bd] [-webkit-text-stroke:1px_#9ab4cd] font-['DejaVu_Sans',sans-serif]">WWW.3DSJW.COM</span>
            </span>
        </a>
    )
}

export default function App() {
    return (
        <div className="relative h-screen overflow-hidden flex flex-col bg-[#fafbfb] border-l-2 border-[#85888a] font-['Roboto','Noto_Sans_CJK_SC',sans-serif]">
            <header className="shrink-0 border-b border-[#9eb3c0]">
                <TitleBar />
                <Tabs />
                <Ribbon />
            </header>
            <div className="flex-1 flex min-h-0">
                <ModelTree />
                <Viewport />
            </div>
            <StatusBar />
            <Watermark />
        </div>
    )
}
